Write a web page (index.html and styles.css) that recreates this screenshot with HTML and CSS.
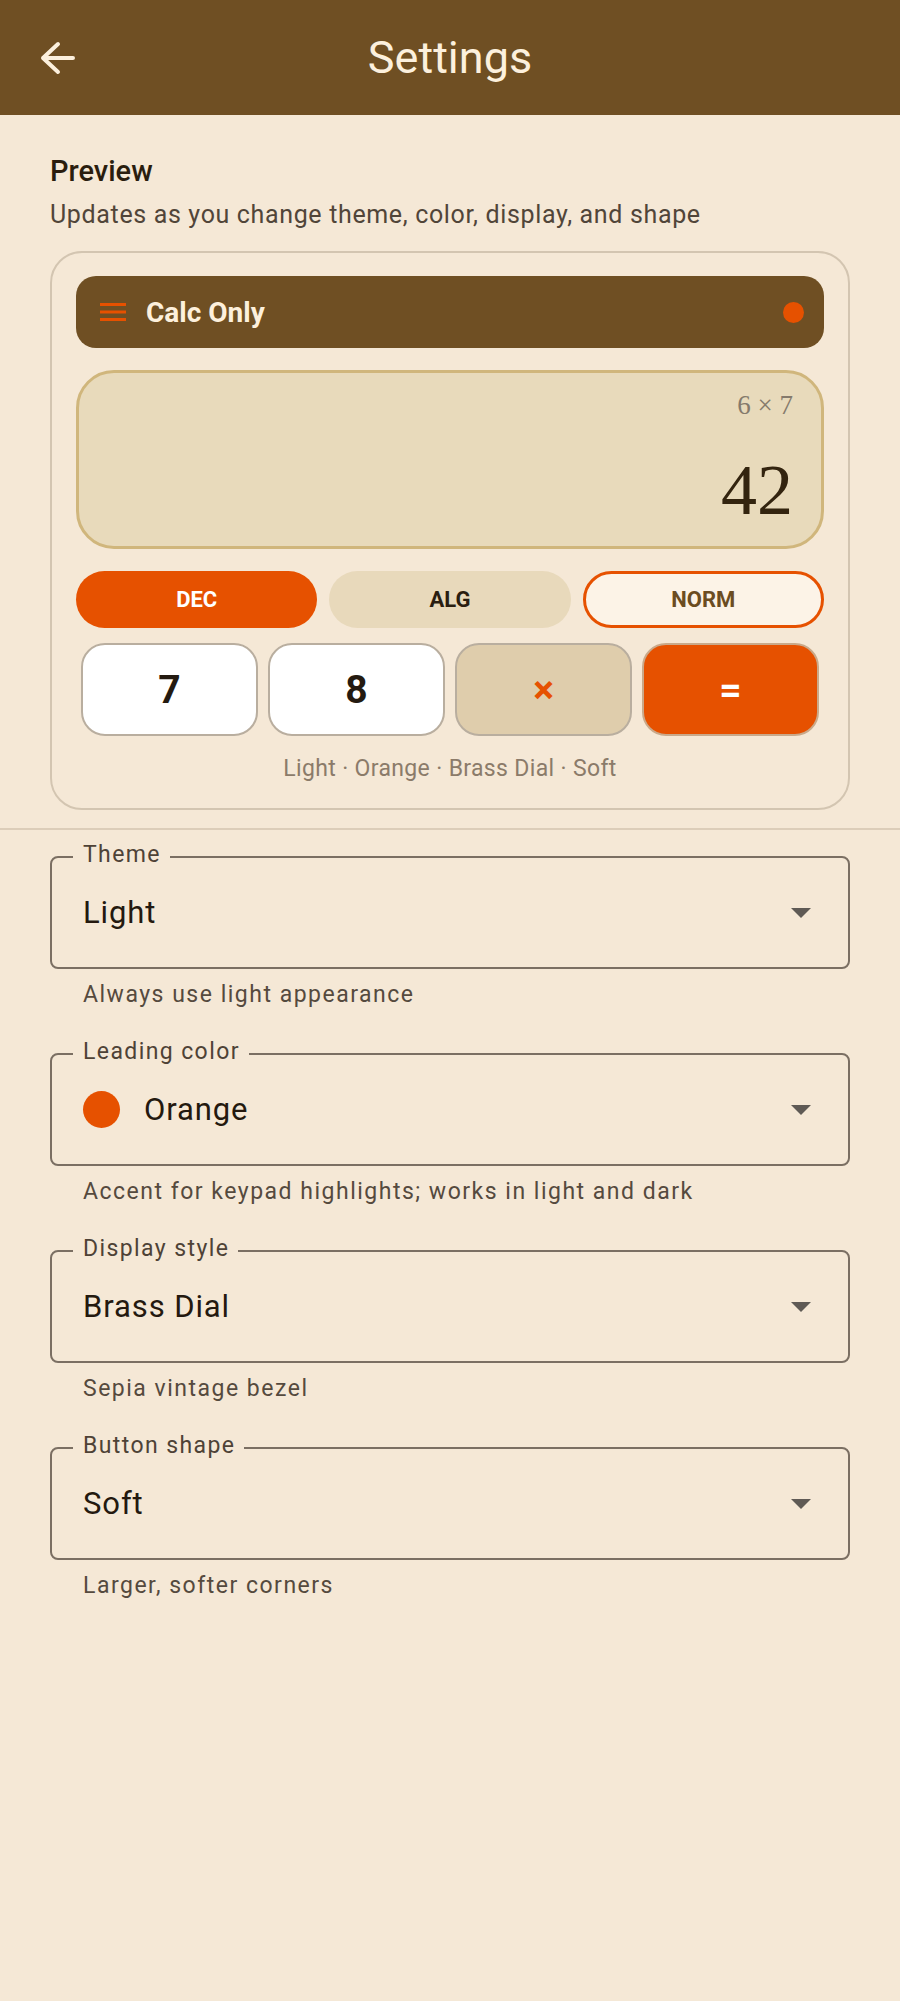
FILE: index.html
```html
<!DOCTYPE html>
<html lang="en">
<head>
<meta charset="utf-8">
<title>Settings</title>
<link rel="stylesheet" href="styles.css">
</head>
<body>
<header class="appbar">
  <div class="back">
    <svg width="38" height="36" viewBox="0 0 38 36"><path d="M34 18H4M19 4L4 18l15 14" fill="none" stroke="#fcf0dd" stroke-width="4" stroke-linecap="round" stroke-linejoin="round"/></svg>
  </div>
  <h1 class="title">Settings</h1>
  <div></div>
</header>

<section class="preview">
  <h2 class="preview-title">Preview</h2>
  <p class="preview-sub">Updates as you change theme, color, display, and shape</p>
  <div class="card">
    <div class="bar">
      <svg width="26" height="18" viewBox="0 0 26 18"><path d="M0 1.5h26M0 9h26M0 16.5h26" stroke="#e65100" stroke-width="3"/></svg>
      <span class="bar-title">Calc Only</span>
      <span class="dot"></span>
    </div>
    <div class="display">
      <div class="expr">6 × 7</div>
      <div class="result">42</div>
    </div>
    <div class="modes">
      <div class="mode mode-dec">DEC</div>
      <div class="mode mode-alg">ALG</div>
      <div class="mode mode-norm">NORM</div>
    </div>
    <div class="keys">
      <div class="key key-num">7</div>
      <div class="key key-num">8</div>
      <div class="key key-op">×</div>
      <div class="key key-eq">=</div>
    </div>
    <div class="caption">Light · Orange · Brass Dial · Soft</div>
  </div>
</section>

<hr class="divider">

<section class="fields">
  <div class="field">
    <div class="field-box">
      <span class="field-label">Theme</span>
      <span class="field-value">Light</span>
      <svg class="caret" width="20" height="10" viewBox="0 0 20 10"><path d="M0 0h20L10 10z" fill="#5f5a55"/></svg>
    </div>
    <p class="field-help">Always use light appearance</p>
  </div>
  <div class="field">
    <div class="field-box">
      <span class="field-label">Leading color</span>
      <span class="swatch"></span>
      <span class="field-value">Orange</span>
      <svg class="caret" width="20" height="10" viewBox="0 0 20 10"><path d="M0 0h20L10 10z" fill="#5f5a55"/></svg>
    </div>
    <p class="field-help">Accent for keypad highlights; works in light and dark</p>
  </div>
  <div class="field">
    <div class="field-box">
      <span class="field-label">Display style</span>
      <span class="field-value">Brass Dial</span>
      <svg class="caret" width="20" height="10" viewBox="0 0 20 10"><path d="M0 0h20L10 10z" fill="#5f5a55"/></svg>
    </div>
    <p class="field-help">Sepia vintage bezel</p>
  </div>
  <div class="field">
    <div class="field-box">
      <span class="field-label">Button shape</span>
      <span class="field-value">Soft</span>
      <svg class="caret" width="20" height="10" viewBox="0 0 20 10"><path d="M0 0h20L10 10z" fill="#5f5a55"/></svg>
    </div>
    <p class="field-help">Larger, softer corners</p>
  </div>
</section>
</body>
</html>
```

FILE: styles.css
```css
* { box-sizing: border-box; }

body {
  margin: 0;
  background: #f5e8d6;
  font-family: Roboto, "Noto Sans", sans-serif;
}

.appbar {
  height: 115px;
  background: #6f4f23;
  display: grid;
  grid-template-columns: 1fr auto 1fr;
  align-items: center;
}

.back {
  padding-left: 39px;
  display: flex;
}

.title {
  margin: 0;
  font-size: 45px;
  line-height: 52px;
  font-weight: 400;
  color: #fcf0dd;
}

.preview {
  padding: 38px 50px 0;
}

.preview-title {
  margin: 0;
  font-size: 29px;
  line-height: 36px;
  font-weight: 500;
  color: #2a1d0e;
}

.preview-sub {
  margin: 10px 0 0;
  font-size: 25px;
  line-height: 32px;
  color: #514539;
  letter-spacing: 0.65px;
}

.card {
  margin-top: 20px;
  border: 2px solid #d3c5b1;
  border-radius: 32px;
  padding: 23px 24px 25px;
}

.bar {
  height: 72px;
  border-radius: 20px;
  background: #6f4f23;
  display: flex;
  align-items: center;
  gap: 20px;
  padding: 0 20px 0 24px;
}

.bar-title {
  font-size: 28px;
  font-weight: 700;
  color: #fdf0dc;
}

.dot {
  width: 21px;
  height: 21px;
  border-radius: 50%;
  background: #e65100;
  margin-left: auto;
}

.display {
  margin-top: 22px;
  height: 179px;
  border: 3px solid #d0b67c;
  border-radius: 38px;
  background: #e8dabb;
  padding: 16px 28px;
  text-align: right;
  font-family: "Liberation Serif", "DejaVu Serif", serif;
}

.expr {
  font-size: 27px;
  line-height: 32px;
  color: #857a6c;
}

.result {
  margin-top: 29px;
  font-size: 72px;
  line-height: 80px;
  color: #33240f;
}

.modes {
  margin-top: 22px;
  display: grid;
  grid-template-columns: repeat(3, 1fr);
  gap: 12px;
}

.mode {
  height: 57px;
  border-radius: 29px;
  display: flex;
  align-items: center;
  justify-content: center;
  font-size: 22px;
  font-weight: 700;
}

.mode-dec { background: #e65100; color: #ffffff; }
.mode-alg { background: #e8d9bb; color: #2a1e10; }
.mode-norm { background: #fcf3e7; border: 3px solid #e65100; color: #6b4c21; }

.keys {
  margin-top: 15px;
  display: grid;
  grid-template-columns: repeat(4, 1fr);
  gap: 10px;
  padding: 0 5px;
}

.key {
  height: 93px;
  border: 2px solid #b9ae9f;
  border-radius: 24px;
  display: flex;
  align-items: center;
  justify-content: center;
  font-size: 39px;
  font-weight: 700;
}

.key-num { background: #ffffff; color: #241a10; }
.key-op { background: #dfcdac; color: #e65100; }
.key-eq { background: #e65100; color: #ffffff; border-color: #c9a98a; }

.caption {
  margin-top: 19px;
  text-align: center;
  font-size: 23px;
  line-height: 28px;
  letter-spacing: 0.35px;
  color: #8b7b6a;
}

.divider {
  margin: 18px 0 0;
  border: 0;
  height: 2px;
  background: #dccdb9;
}

.fields {
  padding: 26px 50px 0;
}

.field + .field {
  margin-top: 44px;
}

.field-box {
  position: relative;
  height: 113px;
  border: 2px solid #7b6f63;
  border-radius: 8px;
  display: flex;
  align-items: center;
  padding: 0 37px 0 31px;
}

.field-label {
  position: absolute;
  top: -17px;
  left: 21px;
  padding: 0 9px 0 10px;
  background: #f5e8d6;
  font-size: 23px;
  line-height: 28px;
  letter-spacing: 1.4px;
  color: #4e4236;
}

.field-value {
  font-size: 31px;
  line-height: 38px;
  letter-spacing: 0.9px;
  color: #24190f;
}

.swatch {
  width: 37px;
  height: 37px;
  border-radius: 50%;
  background: #e65100;
  margin-right: 24px;
}

.caret {
  margin-left: auto;
}

.field-help {
  margin: 12px 0 0;
  padding-left: 33px;
  font-size: 23px;
  line-height: 28px;
  letter-spacing: 1.5px;
  color: #554a3e;
}
```
